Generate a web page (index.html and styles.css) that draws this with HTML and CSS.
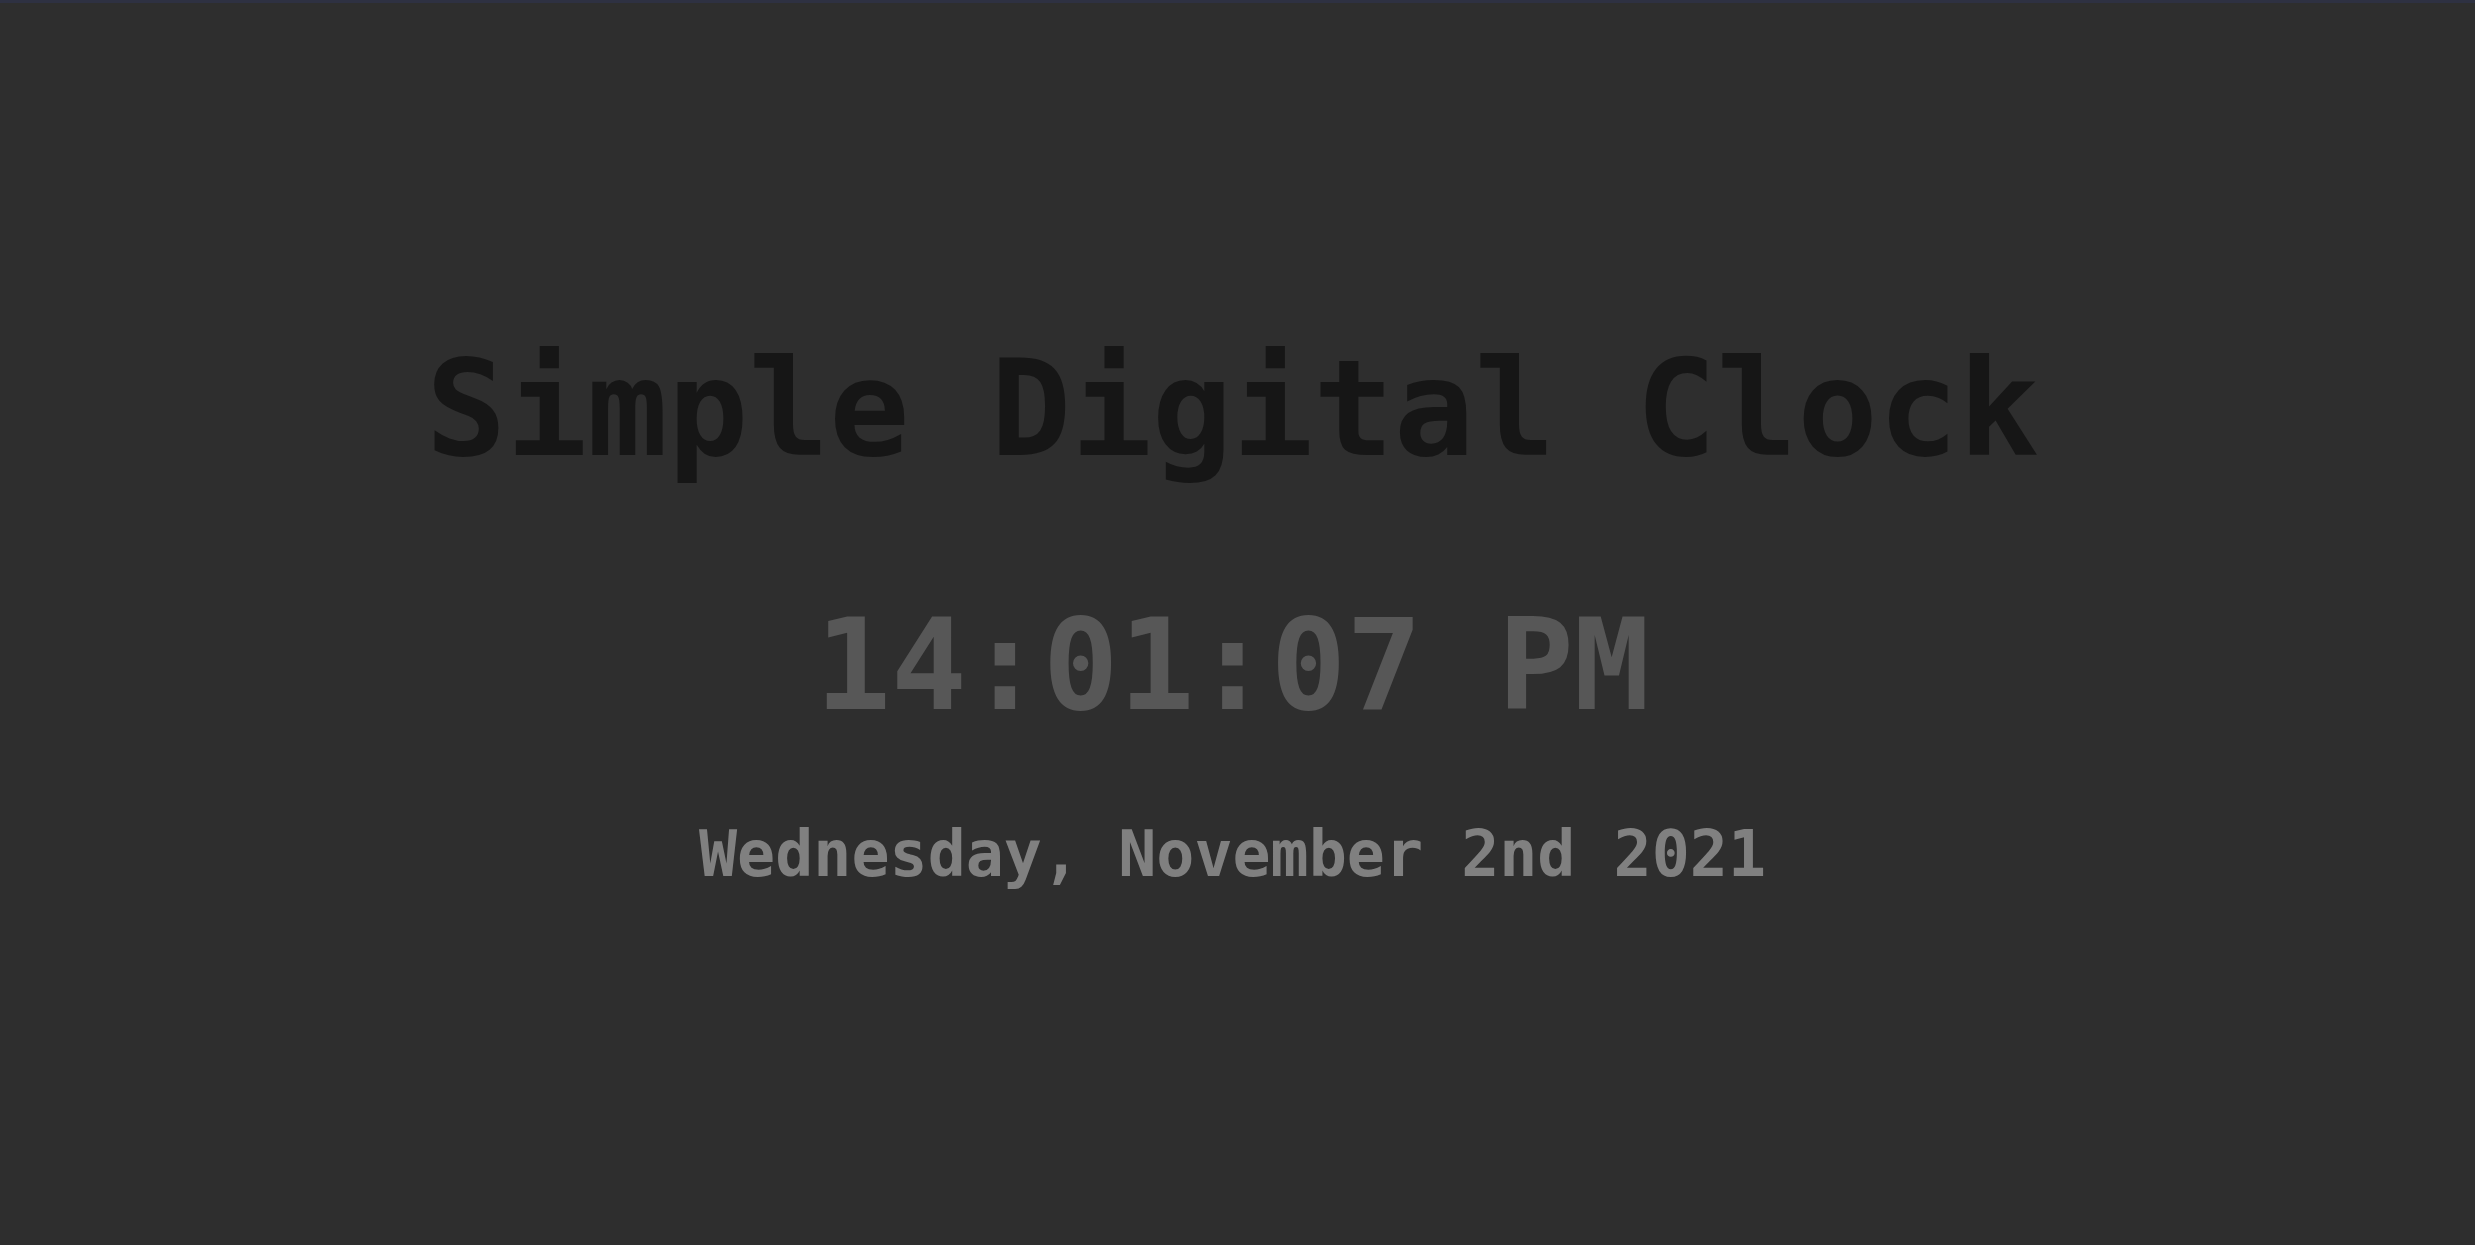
FILE: index.html
```html
<!DOCTYPE html>
<html lang="en">
<head>
<meta charset="utf-8">
<title>Simple Digital Clock</title>
<link rel="stylesheet" href="styles.css">
</head>
<body>
<div class="topbar"></div>
<main class="clock">
  <h1 class="clock-title">Simple Digital Clock</h1>
  <div class="clock-time">14:01:07 PM</div>
  <div class="clock-date">Wednesday, November 2nd 2021</div>
</main>
</body>
</html>
```

FILE: styles.css
```css
html, body {
  margin: 0;
  padding: 0;
  height: 100%;
}
body {
  background: #2e2e2e;
  font-family: "DejaVu Sans Mono", "Liberation Mono", monospace;
  font-weight: bold;
  overflow: hidden;
}
.topbar {
  height: 3px;
  background: #2e3142;
}
.clock {
  display: flex;
  flex-direction: column;
  align-items: center;
  padding-top: 339px;
  padding-right: 10px;
}
.clock-title {
  margin: 0;
  font-size: 134px;
  line-height: 134px;
  color: #161616;
  font-weight: bold;
}
.clock-time {
  margin-top: 127px;
  font-size: 126px;
  line-height: 126px;
  color: #575757;
}
.clock-date {
  margin-top: 93px;
  font-size: 63.3px;
  line-height: 64px;
  color: #808080;
}
```
